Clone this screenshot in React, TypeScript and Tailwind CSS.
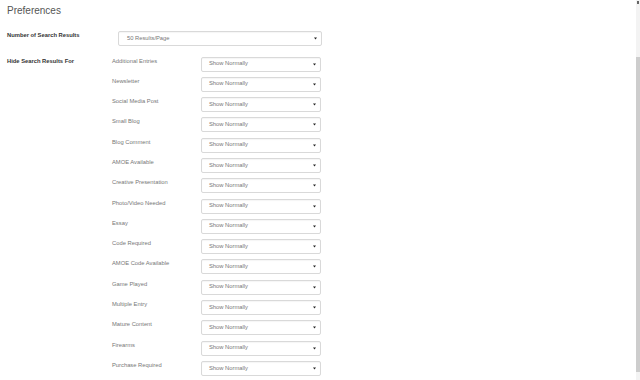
const HIDE_OPTIONS = [
  'Additional Entries',
  'Newsletter',
  'Social Media Post',
  'Small Blog',
  'Blog Comment',
  'AMOE Available',
  'Creative Presentation',
  'Photo/Video Needed',
  'Essay',
  'Code Required',
  'AMOE Code Available',
  'Game Played',
  'Multiple Entry',
  'Mature Content',
  'Firearms',
  'Purchase Required'
];

function SelectBox({ value, className }: { value: string; className: string }) {
  return (
    <div
      className={`flex h-[15px] items-center justify-between rounded-[2px] border border-[#d9d9d9] bg-white text-[5.8px] leading-none text-[#777] shadow-[inset_0_1px_1px_rgba(0,0,0,0.04)] ${className}`}
    >
      <span>{value}</span>
      <svg width="3" height="3" viewBox="0 0 3 3" className="mr-[4px]">
        <path d="M0 0.5 L3 0.5 L1.5 2.5 Z" fill="#222" />
      </svg>
    </div>
  );
}

export default function App() {
  return (
    <div className="flex h-[380px] w-[640px] overflow-hidden bg-white font-['Liberation_Sans',Arial,sans-serif]">
      <div className="flex-1 pl-[7px] pt-[4.5px]">
        <h1 className="text-[10px] leading-[12px] text-[#555]">Preferences</h1>

        <div className="mt-[14.5px] flex items-start">
          <div className="w-[111px] pt-[1px] text-[5.8px] font-bold leading-[7px] text-[#333]">
            Number of Search Results
          </div>
          <SelectBox value="50 Results/Page" className="w-[204px] pl-[8px]" />
        </div>

        <div className="mt-[10.5px] flex items-start">
          <div className="w-[105px] pt-[1px] text-[5.8px] font-bold leading-[7px] text-[#333]">
            Hide Search Results For
          </div>
          <div className="flex flex-col gap-[5.3px]">
            {HIDE_OPTIONS.map((label) => (
              <div key={label} className="flex items-start">
                <div className="w-[89px] pt-[1px] text-[5.8px] leading-[7px] text-[#777]">{label}</div>
                <SelectBox value="Show Normally" className="w-[120px] pl-[7px]" />
              </div>
            ))}
          </div>
        </div>
      </div>

      <div className="flex w-[4px] flex-col bg-[#f3f3f3]">
        <div className="mx-auto mt-[1px] h-[3px] w-[2px] bg-[#666]" />
        <div className="mt-[53px] h-[315px] bg-[#cdcdcd]" />
      </div>
    </div>
  );
}
